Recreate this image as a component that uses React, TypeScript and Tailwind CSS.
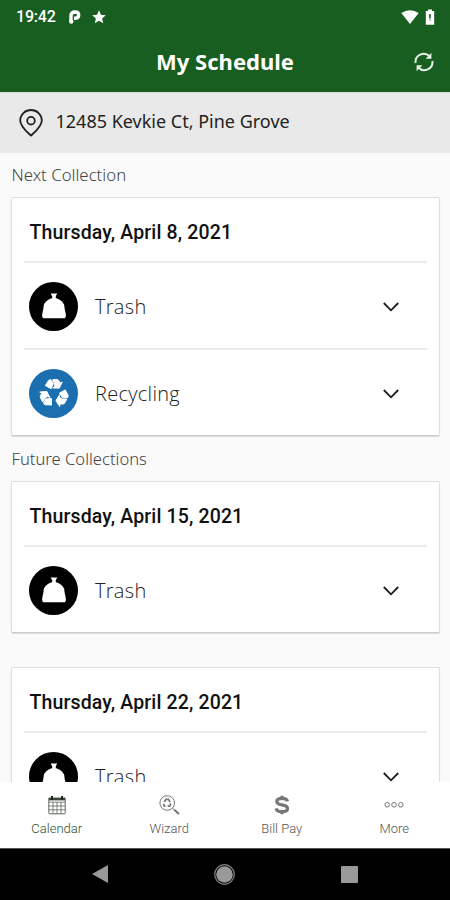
import { clsx } from 'clsx';

type Kind = 'trash' | 'recycling';

type Collection = {
  date: string;
  items: Kind[];
};

const NEXT: Collection = { date: 'Thursday, April 8, 2021', items: ['trash', 'recycling'] };

const FUTURE: Collection[] = [
  { date: 'Thursday, April 15, 2021', items: ['trash'] },
  { date: 'Thursday, April 22, 2021', items: ['trash'] },
];

const LABELS: Record<Kind, string> = { trash: 'Trash', recycling: 'Recycling' };

function StatusBar() {
  return (
    <div className="flex h-[33px] items-center pl-4 pr-[15px] text-white">
      <span className="w-[53px] font-['Roboto'] text-base font-medium leading-none tracking-[-0.2px]">19:42</span>
      <svg width="12" height="14" viewBox="0 0 12 14" className="shrink-0">
        <path d="M2 11V5.8Q2 2 6 2Q9.7 2 9.7 5.1Q9.7 8.2 6.6 8.2H5" fill="none" stroke="currentColor" strokeWidth="3.4" strokeLinejoin="round" />
        <circle cx="2.3" cy="11.6" r="2.2" fill="currentColor" />
      </svg>
      <svg width="14" height="14" viewBox="0 0 14 14" className="ml-[11px] shrink-0" fill="currentColor">
        <path d="M7 0.3L8.9 4.8L13.8 5.2L10.1 8.4L11.2 13.2L7 10.7L2.8 13.2L3.9 8.4L0.2 5.2L5.1 4.8Z" />
      </svg>
      <svg width="18" height="14" viewBox="0 0 18 14" className="ml-auto shrink-0" fill="currentColor">
        <path d="M0.3 3Q9 -2.6 17.7 3L9 14Z" />
      </svg>
      <svg width="10" height="16" viewBox="0 0 10 16" className="ml-[6px] shrink-0">
        <path d="M3 0.5H7V2H9.2V15.7H0.8V2H3Z" fill="currentColor" />
        <path d="M4.2 5H5.8V9.5H4.2ZM4.4 10.5H5.6V11.5H4.4Z" fill="#175e20" />
      </svg>
    </div>
  );
}

function RefreshIcon() {
  return (
    <svg width="20" height="20" viewBox="0 0 20 20" className="absolute right-[16px] top-[19px]">
      <path d="M1.6 11A8.1 8.1 0 0 1 15.6 4.5M18.4 9A8.1 8.1 0 0 1 4.4 15.5" fill="none" stroke="#e6f0e6" strokeWidth="2" />
      <path d="M17.4 0.8V6.7H11.6ZM2.6 19.2V13.3H8.4Z" fill="#e6f0e6" />
    </svg>
  );
}

function RecycleArm({ angle }: { angle: number }) {
  return (
    <g transform={`rotate(${angle} 14 14.5)`}>
      <path d="M5.3 6.6L8.5 1.4L10.2 0.6L11.6 1.4L13.4 4.8L11 9.8Z" />
      <path d="M12.6 0.6H17.3L18.6 1.3L20.2 4L22.3 3L19.3 9.2L12.6 8.9L14.7 7.6L14.7 5Z" />
    </g>
  );
}

function KindIcon({ kind }: { kind: Kind }) {
  return (
    <span
      className={clsx(
        'flex size-[49px] shrink-0 items-center justify-center rounded-full text-white',
        kind === 'trash' ? 'bg-black' : 'bg-[#1b6fae]'
      )}
    >
      {kind === 'trash' ? (
        <svg width="26" height="26" viewBox="0 0 26 26" fill="currentColor">
          <path d="M9.6 0.5H16.2L14.8 3.2V5.3C18.5 6 22 8.8 23.2 12L23.6 15.5L24.4 19L25 23L24 25.2H2L1 23L1.6 19L2.4 15.5L2.8 12C4 8.8 7.5 6 11.2 5.3V3.2Z" />
        </svg>
      ) : (
        <svg width="28" height="28" viewBox="0 0 28 28" fill="currentColor" stroke="currentColor" strokeWidth="0.9" strokeLinejoin="round" className="overflow-visible">
          <RecycleArm angle={0} />
          <RecycleArm angle={120} />
          <RecycleArm angle={240} />
        </svg>
      )}
    </span>
  );
}

function CollectionCard({ date, items }: Collection) {
  return (
    <div className="rounded-[2px] border border-[#dedede] border-b-[#cbcbcb] bg-white px-3 shadow-[0_1px_1px_rgba(0,0,0,0.13)]">
      <h2 className="flex h-[63px] items-center pl-[5.5px] pt-[7px] font-['Roboto'] text-[19.5px] font-medium tracking-[0.14px] text-[#111]">
        {date}
      </h2>
      {items.map((kind) => (
        <div key={kind} className="flex h-[87px] items-center border-t-2 border-[#ececec] pl-[5px] pr-[28px] pt-px">
          <KindIcon kind={kind} />
          <span className="ml-[17px] flex-1 pt-[2px] font-['Open_Sans'] text-[20px] font-light tracking-[0.3px] text-[#222]">
            {LABELS[kind]}
          </span>
          <svg width="16" height="12" viewBox="0 0 16 12" className="shrink-0">
            <path d="M0.8 3L8 10.3L15.2 3" fill="none" stroke="#1c1c1c" strokeWidth="1.8" />
          </svg>
        </div>
      ))}
    </div>
  );
}

function CalendarIcon() {
  return (
    <svg width="18" height="20" viewBox="0 0 18 20" fill="none" stroke="#5a685a">
      <path d="M0.8 3H17.2V17.8Q17.2 18.8 16.2 18.8H1.8Q0.8 18.8 0.8 17.8Z" strokeWidth="1" />
      <path d="M1 7.2H17M1 11H17M1 14.8H17M5 7V18.5M9 7V18.5M13 7V18.5" strokeWidth="0.8" />
      <path d="M1 4.2H17" stroke="#3a493a" strokeWidth="2.4" />
      <path d="M4 1V5M14 1V5" stroke="#1d2a1d" strokeWidth="2" />
    </svg>
  );
}

function WizardIcon() {
  return (
    <svg width="21" height="20" viewBox="0 0 21 20" fill="none" stroke="#777">
      <circle cx="8.2" cy="8" r="7.3" strokeWidth="1" />
      <path d="M5.3 7L7 4.3H9.4L11.1 7M11.8 8.3L10.7 11.2H8.7M6.5 11.2H5.4L4.3 8.8" strokeWidth="1.7" />
      <path d="M13.5 13L15.5 15" strokeWidth="1" />
      <path d="M15.2 14.7L20 19" strokeWidth="2" />
    </svg>
  );
}

function DollarIcon() {
  return (
    <svg width="16" height="20" viewBox="0 0 16 20" fill="none" stroke="#777">
      <path d="M13.5 6.3Q12.7 3.3 8 3.3Q2.8 3.3 2.8 6.4Q2.8 9 8 9.8Q13.5 10.7 13.5 13.4Q13.5 16.7 8 16.7Q2.9 16.7 2.1 13.3" strokeWidth="3.2" />
      <path d="M8 0.8V3.5M8 16.5V19.2" strokeWidth="3" />
    </svg>
  );
}

function MoreIcon() {
  return (
    <svg width="20" height="20" viewBox="0 0 20 20" fill="none" stroke="#777">
      <circle cx="3.2" cy="9.8" r="2.3" />
      <circle cx="10" cy="9.8" r="2.3" />
      <circle cx="16.8" cy="9.8" r="2.3" />
    </svg>
  );
}

const TABS = [
  { label: 'Calendar', icon: CalendarIcon },
  { label: 'Wizard', icon: WizardIcon },
  { label: 'Bill Pay', icon: DollarIcon },
  { label: 'More', icon: MoreIcon },
];

export default function App() {
  return (
    <div className="flex h-[900px] w-[450px] flex-col overflow-hidden bg-[#fafafa]">
      {/* Header */}
      <header className="h-[92px] shrink-0 bg-[#175e20]">
        <StatusBar />
        <div className="relative flex h-[59px] items-center justify-center pb-[3px]">
          <h1 className="font-['Noto_Sans'] text-[22px] font-bold text-white">My Schedule</h1>
          <RefreshIcon />
        </div>
      </header>

      {/* Address */}
      <div className="flex h-[61px] shrink-0 items-center border-t border-[#d2d8d2] bg-[#e9e9e9] pl-[19px]">
        <svg width="24" height="28" viewBox="0 0 24 28" fill="none" stroke="#222" strokeWidth="1.8" className="shrink-0">
          <path d="M12 26.6C8.5 23.2 1.2 17.5 1.2 11.4A10.8 10.4 0 0 1 22.8 11.4C22.8 17.5 15.5 23.2 12 26.6Z" />
          <circle cx="12" cy="11.7" r="3.8" />
        </svg>
        <span className="ml-[12.5px] pb-[3px] font-['Noto_Sans'] text-[18px] text-[#222]">12485 Kevkie Ct, Pine Grove</span>
      </div>

      {/* Schedule */}
      <main className="min-h-0 flex-1 overflow-hidden pl-[11px] pr-[10px]">
        <p className="flex h-[44px] items-center pl-[0.5px] font-['Noto_Sans'] text-[16.8px] font-light text-[#444]">Next Collection</p>
        <CollectionCard {...NEXT} />
        <p className="flex h-[45px] items-center pl-[0.5px] pt-[2px] font-['Noto_Sans'] text-[16.6px] font-light text-[#444]">Future Collections</p>
        <div className="flex flex-col gap-[34px]">
          {FUTURE.map((c) => (
            <CollectionCard key={c.date} {...c} />
          ))}
        </div>
      </main>

      {/* Tabs */}
      <nav className="grid h-[66px] shrink-0 grid-cols-4 bg-white">
        {TABS.map(({ label, icon: Icon }, i) => (
          <div key={label} className="flex flex-col items-center pl-px pt-[13px]">
            <Icon />
            <span
              className={clsx(
                "mt-[5px] font-['Roboto'] text-[13px] font-light leading-[18px]",
                i === 0 ? 'text-[#2c5530]' : 'text-[#555]'
              )}
            >
              {label}
            </span>
          </div>
        ))}
      </nav>

      {/* System buttons */}
      <div className="flex h-[52px] shrink-0 items-center justify-center gap-[106px] border-t border-[#555] bg-black pb-px">
        <svg width="16" height="18" viewBox="0 0 16 18">
          <path d="M16 0V18L0 9Z" fill="#999" />
        </svg>
        <svg width="21" height="21" viewBox="0 0 21 21">
          <circle cx="10.5" cy="10.5" r="9.8" fill="none" stroke="#888" strokeWidth="1.2" />
          <circle cx="10.5" cy="10.5" r="8.3" fill="#999" />
        </svg>
        <span className="size-[17px] rounded-[1px] bg-[#999]" />
      </div>
    </div>
  );
}
